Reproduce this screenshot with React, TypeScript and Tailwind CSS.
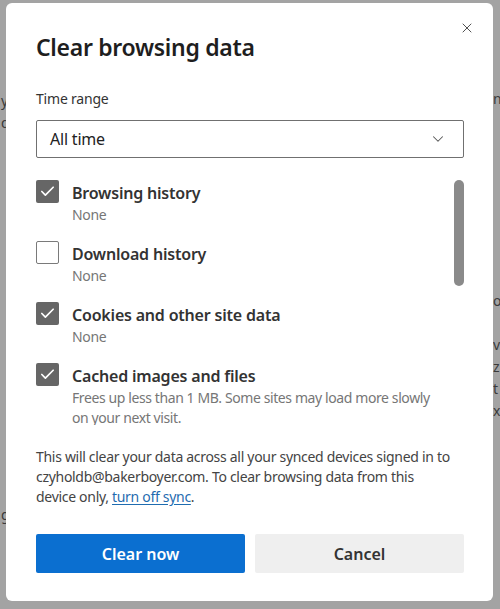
import { X, ChevronDown, Check } from 'lucide-react';

const font = { fontFamily: '"Noto Sans", "Open Sans", Arial, sans-serif' };

interface ItemProps {
  label: string;
  detail: string;
  checked: boolean;
}

function Box({ checked }: { checked: boolean }) {
  return checked ? (
    <div className="w-[23px] h-[23px] rounded-[2px] bg-[#666666] flex items-center justify-center shrink-0">
      <Check className="w-[17px] h-[17px] text-white" strokeWidth={2.4} />
    </div>
  ) : (
    <div className="w-[23px] h-[23px] rounded-[2px] border border-[#7a7a7a] bg-white shrink-0" />
  );
}

function Item({ label, detail, checked }: ItemProps) {
  return (
    <div className="flex gap-[13px] h-[61px] shrink-0">
      <Box checked={checked} />
      <div className="flex flex-col">
        <div className="text-[16px] leading-[24px] mt-[1px] font-semibold text-[#333333] tracking-[-0.2px]">{label}</div>
        <div className="text-[14px] leading-[20px] text-[#767676] tracking-[-0.3px]">{detail}</div>
      </div>
    </div>
  );
}

export default function App() {
  return (
    <div className="w-[500px] h-[609px] bg-[#a3a3a3] relative overflow-hidden" style={font}>
      <div className="flex justify-between h-full text-[14px] text-[#3a3a3a]">
        <div className="flex flex-col pt-[90px] pl-[1px] leading-[22px]">
          <span>y</span>
          <span>d</span>
          <span className="mt-[370px]">g</span>
        </div>
        <div className="flex flex-col pt-[88px] leading-[22px] w-[7px]">
          <span>n</span>
          <span className="mt-[180px]">o</span>
          <span className="mt-[22px]">v</span>
          <span>z</span>
          <span>t</span>
          <span>x</span>
        </div>
      </div>

      <div className="absolute left-[6px] top-[3px] w-[487px] h-[598px] bg-white rounded-[6px] flex flex-col pl-[30px] pr-[29px]">
        <button className="absolute right-[18px] top-[17px] text-[#444]">
          <X className="w-[16px] h-[16px]" strokeWidth={1.4} />
        </button>

        <h1 className="mt-[28px] text-[23px] leading-[32px] font-semibold text-[#1e1e1e] tracking-[-0.3px]">
          Clear browsing data
        </h1>

        <div className="mt-[26px] text-[14px] leading-[20px] text-[#333333] tracking-[-0.2px]">Time range</div>

        <div className="mt-[11px] h-[38px] border border-[#707070] rounded-[2px] flex items-center justify-between pl-[13px] pr-[16px]">
          <span className="text-[16px] text-[#222] tracking-[-0.2px]">All time</span>
          <ChevronDown className="w-[18px] h-[18px] text-[#555]" strokeWidth={1.4} />
        </div>

        <div className="mt-[22px] h-[245px] overflow-hidden flex">
          <div className="flex-1 flex flex-col">
            <Item label="Browsing history" detail="None" checked />
            <Item label="Download history" detail="None" checked={false} />
            <Item label="Cookies and other site data" detail="None" checked />
            <div className="flex gap-[13px] shrink-0">
              <Box checked />
              <div className="flex flex-col">
                <div className="text-[16px] leading-[24px] mt-[1px] font-semibold text-[#333333] tracking-[-0.2px]">
                  Cached images and files
                </div>
                <div className="text-[14px] leading-[20px] text-[#767676] tracking-[-0.4px]">
                  Frees up less than 1 MB. Some sites may load more slowly on your next visit.
                </div>
              </div>
            </div>
          </div>
          <div className="w-[10px] ml-[9px] flex flex-col">
            <div className="h-[106px] rounded-full bg-[#8a8a8a]" />
          </div>
        </div>

        <p className="mt-[22px] text-[14px] leading-[20px] text-[#444444] tracking-[-0.3px]">
          This will clear your data across all your synced devices signed in to
          <br />
          czyholdb@bakerboyer.com. To clear browsing data from this
          <br />
          device only, <a className="text-[#1f6cb0] underline underline-offset-2">turn off sync</a>.
        </p>

        <div className="mt-[27px] flex gap-[10px]">
          <button className="flex-1 h-[39px] rounded-[2px] bg-[#0b6fd0] text-white text-[16px] font-semibold">
            Clear now
          </button>
          <button className="flex-1 h-[39px] rounded-[2px] bg-[#efefef] text-[#333] text-[16px] font-semibold">
            Cancel
          </button>
        </div>
      </div>
    </div>
  );
}
